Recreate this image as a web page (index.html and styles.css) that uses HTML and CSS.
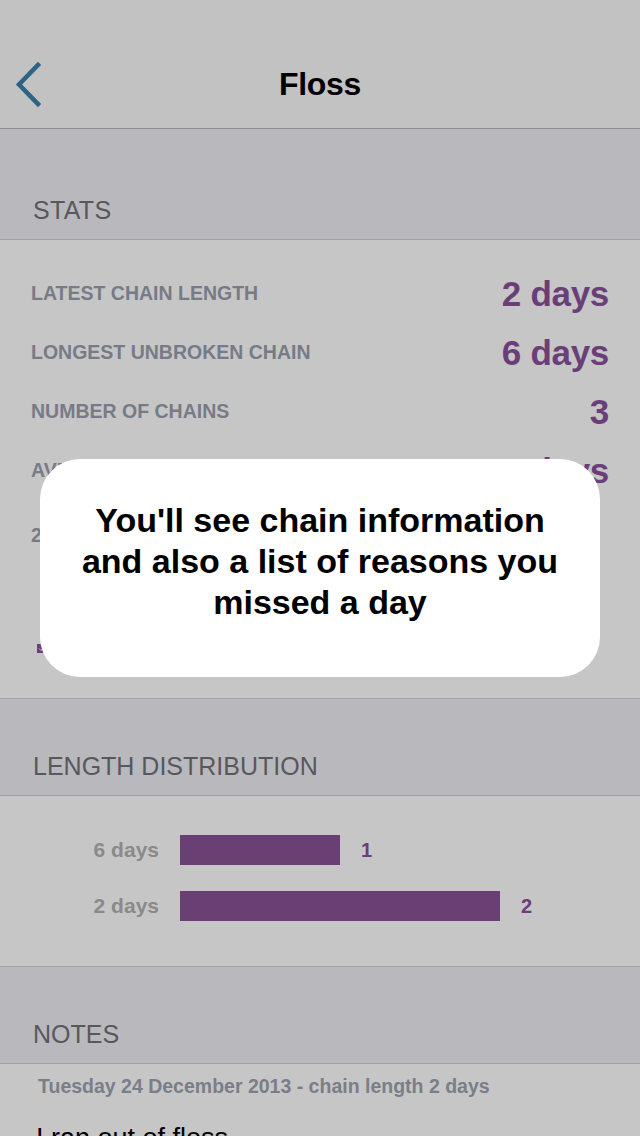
FILE: index.html
```html
<!DOCTYPE html>
<html lang="en">
<head>
<meta charset="utf-8">
<title>Floss</title>
<link rel="stylesheet" href="styles.css">
</head>
<body>
<div class="screen">
  <header class="navbar">
    <svg class="back" width="30" height="50" viewBox="0 0 30 50" aria-hidden="true">
      <path d="M23 4 L4 23.5 L23 43" fill="none" stroke="#2d6385" stroke-width="4.5" stroke-linecap="square"/>
    </svg>
    <h1 class="title">Floss</h1>
  </header>

  <div class="section-head stats-head">STATS</div>
  <section class="stats">
    <div class="stat-row"><span class="stat-label">LATEST CHAIN LENGTH</span><span class="stat-value">2 days</span></div>
    <div class="stat-row"><span class="stat-label">LONGEST UNBROKEN CHAIN</span><span class="stat-value">6 days</span></div>
    <div class="stat-row"><span class="stat-label">NUMBER OF CHAINS</span><span class="stat-value">3</span></div>
    <div class="stat-row"><span class="stat-label">AVERAGE CHAIN LENGTH</span><span class="stat-value">3 days</span></div>
    <div class="year-row"><span class="stat-label">2013</span></div>
    <div class="legend">
      <svg class="legend-box" width="9" height="9" viewBox="0 0 9 9" aria-hidden="true">
        <rect width="9" height="9" fill="#6a3e79"/>
        <path d="M2 4.5 L4 6.5 L7 2.5" fill="none" stroke="#c6c6c6" stroke-width="1"/>
      </svg>
    </div>
  </section>

  <div class="section-head dist-head">LENGTH DISTRIBUTION</div>
  <section class="dist">
    <div class="bar-row">
      <span class="bar-label">6 days</span>
      <span class="bar" style="width:160px"></span>
      <span class="bar-count">1</span>
    </div>
    <div class="bar-row">
      <span class="bar-label">2 days</span>
      <span class="bar" style="width:320px"></span>
      <span class="bar-count">2</span>
    </div>
  </section>

  <div class="section-head notes-head">NOTES</div>
  <section class="notes">
    <div class="note-date">Tuesday 24 December 2013 - chain length 2 days</div>
    <div class="note-text">I ran out of floss</div>
  </section>

  <div class="popup">
    <p class="popup-text">You'll see chain information and also a list of reasons you missed a day</p>
  </div>
</div>
</body>
</html>
```

FILE: styles.css
```css
* { box-sizing: border-box; }

html, body {
  margin: 0;
  padding: 0;
}

body {
  width: 640px;
  height: 1136px;
  overflow: hidden;
  background: #c6c6c6;
  font-family: "Liberation Sans", Arial, sans-serif;
}

.screen {
  position: relative;
  width: 640px;
  height: 1136px;
  overflow: hidden;
  display: flex;
  flex-direction: column;
}

.screen > * { flex-shrink: 0; }

.navbar {
  height: 129px;
  background: #c2c2c2;
  border-bottom: 1px solid #8f8f8f;
  display: flex;
  align-items: center;
  justify-content: center;
  position: relative;
  padding-top: 40px;
}

.back {
  position: absolute;
  left: 15px;
  top: 61px;
}

.title {
  margin: 0;
  font-size: 32px;
  font-weight: bold;
  color: #000;
  letter-spacing: -0.3px;
}

.section-head {
  background: #b9b8bd;
  border-bottom: 1px solid #a2a2a6;
  color: #58585c;
  font-size: 25px;
  line-height: 30px;
  padding: 0 33px 14px;
  display: flex;
  align-items: flex-end;
}

.stats-head { height: 111px; letter-spacing: 0.3px; }
.dist-head { height: 98px; border-top: 1px solid #a2a2a6; }
.notes-head { height: 98px; border-top: 1px solid #a2a2a6; }

.stats {
  height: 458px;
  padding: 24px 31px 0 31px;
  display: flex;
  flex-direction: column;
}

.stat-row {
  height: 59px;
  display: flex;
  align-items: center;
  justify-content: space-between;
  flex-shrink: 0;
}

.stat-label {
  font-size: 19.5px;
  font-weight: bold;
  color: #777b86;
}

.stat-value {
  font-size: 35px;
  font-weight: bold;
  color: #6a3e79;
  letter-spacing: -0.3px;
}

.year-row {
  height: 70px;
  display: flex;
  align-items: center;
  flex-shrink: 0;
}

.legend {
  margin-top: 74px;
  display: flex;
  align-items: center;
  padding-left: 6px;
  flex-shrink: 0;
}

.legend-box {
  display: block;
}

.dist {
  height: 170px;
  padding-top: 39px;
  display: flex;
  flex-direction: column;
  gap: 26px;
}

.bar-row {
  display: flex;
  align-items: center;
  height: 30px;
}

.bar-label {
  width: 159px;
  text-align: right;
  font-size: 21px;
  font-weight: bold;
  color: #8a8a8a;
  margin-right: 21px;
}

.bar {
  height: 30px;
  background: #693f74;
}

.bar-count {
  margin-left: 21px;
  font-size: 20px;
  font-weight: bold;
  color: #693f74;
}

.notes {
  padding: 10px 38px 0;
}

.note-date {
  font-size: 19.5px;
  font-weight: bold;
  color: #7a7e88;
  line-height: 24px;
}

.note-text {
  margin-top: 25px;
  font-size: 27px;
  color: #000;
  margin-left: -2px;
}

.popup {
  position: absolute;
  left: 40px;
  top: 459px;
  width: 560px;
  height: 218px;
  background: #fff;
  border-radius: 40px;
  padding: 41px 40px 0;
}

.popup-text {
  margin: 0;
  text-align: center;
  font-size: 34px;
  line-height: 41px;
  font-weight: bold;
  color: #000;
}
```
